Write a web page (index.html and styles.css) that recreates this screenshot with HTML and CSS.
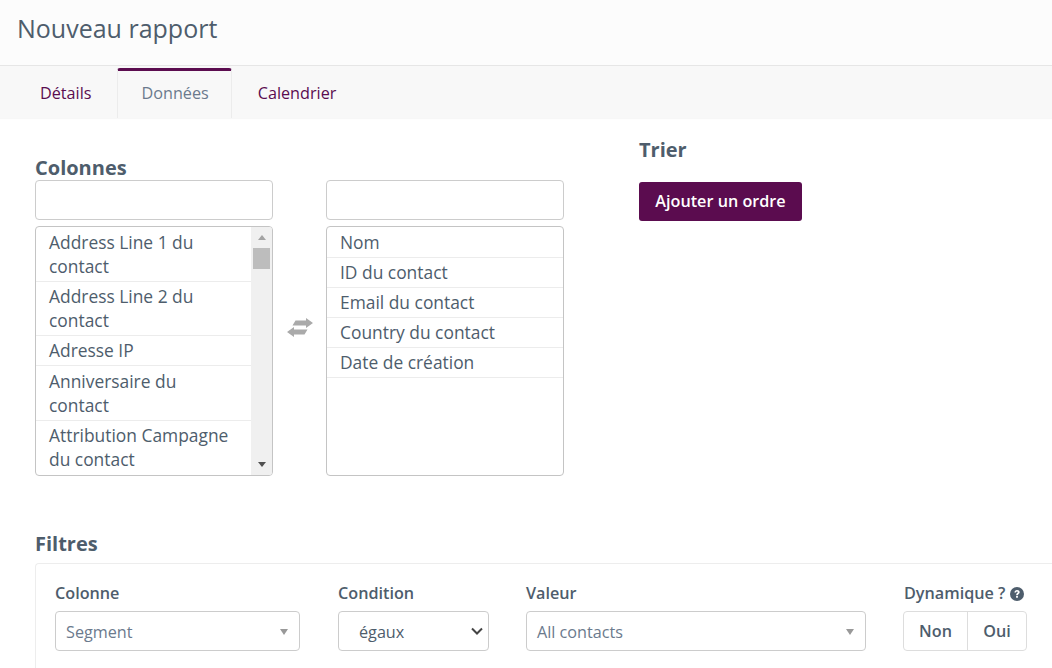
FILE: index.html
```html
<!DOCTYPE html>
<html lang="fr">
<head>
<meta charset="utf-8">
<title>Nouveau rapport</title>
<link rel="stylesheet" href="styles.css">
</head>
<body>
<header class="page-header"><h1 class="page-title">Nouveau rapport</h1></header>
<nav class="tabs">
  <a class="tab">Détails</a>
  <a class="tab tab-active">Données</a>
  <a class="tab tab-link">Calendrier</a>
</nav>
<main class="content">
  <div class="top-row">
    <section class="columns">
      <h2 class="section-title columns-title">Colonnes</h2>
      <div class="picker">
        <div class="picker-col">
          <input class="search" type="text">
          <div class="list list-scroll">
            <ul class="items">
              <li>Address Line 1 du contact</li>
              <li>Address Line 2 du contact</li>
              <li>Adresse IP</li>
              <li>Anniversaire du contact</li>
              <li>Attribution Campagne du contact</li>
            </ul>
            <div class="scrollbar">
              <span class="sb-arrow sb-up"></span>
              <span class="sb-thumb"></span>
              <span class="sb-arrow sb-down"></span>
            </div>
          </div>
        </div>
        <div class="swap">
          <svg class="swap-icon" viewBox="0 0 26 19" width="26" height="19"><path d="M8.500 2.500H19V0L26 5 19 10V7.500H5.500Z M0 14 7 9V11.500H20.500L17.500 16.500H7V19Z" fill="#aaaaaa"/></svg>
        </div>
        <div class="picker-col">
          <input class="search" type="text">
          <div class="list">
            <ul class="items">
              <li>Nom</li>
              <li>ID du contact</li>
              <li>Email du contact</li>
              <li>Country du contact</li>
              <li>Date de création</li>
            </ul>
          </div>
        </div>
      </div>
    </section>
    <section class="sort">
      <h2 class="section-title">Trier</h2>
      <button class="btn-primary" type="button">Ajouter un ordre</button>
    </section>
  </div>
  <h2 class="section-title filters-title">Filtres</h2>
  <section class="panel">
    <div class="field field-col">
      <label class="label">Colonne</label>
      <div class="select">Segment<span class="caret"></span></div>
    </div>
    <div class="field field-cond">
      <label class="label">Condition</label>
      <div class="select select-native">égaux<svg class="chevron" viewBox="0 0 12 8" width="12" height="8"><path d="M1 1.500 6 6.500 11 1.500" fill="none" stroke="#444" stroke-width="2"/></svg></div>
    </div>
    <div class="field field-val">
      <label class="label">Valeur</label>
      <div class="select">All contacts<span class="caret"></span></div>
    </div>
    <div class="field field-dyn">
      <label class="label label-dyn">Dynamique ? <svg class="help" viewBox="0 0 14 14" width="14" height="14"><circle cx="7" cy="7" r="7" fill="#4e5d6c"/><path d="M4.400 5.400C4.500 3.900 5.600 3 7 3 8.500 3 9.700 3.900 9.700 5.200 9.700 6.800 7.900 6.900 7.900 8.200H6.100C6.100 6.200 7.800 6.200 7.800 5.300 7.800 4.900 7.500 4.600 7 4.600 6.500 4.600 6.100 4.900 6 5.500Z M6.100 9H7.900V10.800H6.100Z" fill="#fff"/></svg></label>
      <div class="toggle"><span class="toggle-btn">Non</span><span class="toggle-btn">Oui</span></div>
    </div>
  </section>
</main>
</body>
</html>
```
FILE: styles.css
```css
* { box-sizing: border-box; }
html, body { margin: 0; height: 668px; overflow: hidden; }
body {
  background: #fff;
  color: #4e5d6c;
  font-family: "Open Sans", "Liberation Sans", sans-serif;
  font-size: 16.2px;
  line-height: 24px;
}
.page-header {
  height: 66px;
  background: #fcfcfc;
  border-bottom: 1px solid #e6e6e6;
  padding: 11px 17px 0;
}
.page-title { margin: 0; font-size: 25px; font-weight: 400; line-height: 34px; color: #4e5d6c; }
.tabs {
  height: 52px;
  display: flex;
  background: #f8f8f8;
  padding: 2px 0 0 17px;
  box-shadow: 0 1px 1px rgba(0,0,0,.03);
}
.tab {
  padding: 13px 25px 0 23px;
  color: #5b0c4f;
  height: 50px;
}
.tab-active {
  color: #6b7a8d;
  background: #f8f8f8;
  border: 1px solid #ececec;
  border-top: 3px solid #5b0c4f;
  border-bottom: 0;
  border-radius: 3px 3px 0 0;
  padding: 10px 22px 0 24px;
}
.tab-link { padding-left: 26px; }
.content { padding: 0 0 0 35px; }
.top-row { display: flex; height: 426px; }
.columns { width: 604px; }
.section-title { margin: 0; font-size: 20px; font-weight: 700; line-height: 24px; color: #4e5d6c; }
.columns-title { padding-top: 38px; }
.picker { display: flex; }
.picker-col { width: 238px; }
.search {
  display: block;
  width: 100%;
  height: 40px;
  border: 1px solid #ccc;
  border-radius: 4px;
  background: #fff;
  margin: 0 0 6px;
}
.list {
  height: 250px;
  border: 1px solid #c4c4c4;
  border-radius: 4px;
  display: flex;
  overflow: hidden;
  background: #fff;
}
.items { flex: 1; margin: 0; padding: 1px 0 0; list-style: none; min-width: 0; font-size: 17.4px; }
.items li {
  padding: 2px 13px 3px;
  border-bottom: 1px solid #ececec;
}
.list-scroll .items li:nth-child(4) { padding-top: 3px; }
.list-scroll .items li:last-child { padding-bottom: 12px; }
.scrollbar {
  width: 21px;
  flex: none;
  background: #f0f0f0;
  display: flex;
  flex-direction: column;
  align-items: center;
}
.sb-arrow { width: 0; height: 0; border-left: 4px solid transparent; border-right: 4px solid transparent; }
.sb-up { border-bottom: 5px solid #a3a3a3; margin-top: 8px; }
.sb-thumb { width: 17px; height: 21px; background: #bdbdbd; margin-top: 8px; }
.sb-down { border-top: 5px solid #505050; margin-top: auto; margin-bottom: 8px; }
.swap { width: 53px; display: flex; justify-content: center; padding-top: 138px; }
.swap-icon { display: block; }
.sort { padding-top: 20px; }
.btn-primary {
  display: block;
  margin-top: 20px;
  width: 163px;
  height: 39px;
  background: #5b0c4f;
  color: #fff;
  border: 0;
  border-radius: 3px;
  font-family: inherit;
  font-size: 16.2px;
  font-weight: 600;
  padding: 0 0 2px;
}
.filters-title { margin-top: -12px; }
.panel {
  margin-top: 7px;
  height: 105px;
  border: 1px solid #ededed;
  border-right: 0;
  border-bottom: 0;
  border-radius: 4px 0 0 0;
  padding: 17px 19px 0;
  display: flex;
  overflow: hidden;
}
.label { display: block; font-weight: 600; line-height: 24px; height: 30px; }
.label-dyn { padding-left: 1px; }
.field { flex: none; }
.field-col { width: 245px; margin-right: 38px; }
.field-cond { width: 151px; margin-right: 37px; }
.field-val { width: 340px; margin-right: 37px; }
.field-dyn { width: 124px; white-space: nowrap; }
.help { vertical-align: -2px; }
.select {
  position: relative;
  height: 40px;
  border: 1px solid #ccc;
  border-radius: 4px;
  padding: 8px 10px;
  color: #6b7a8d;
  background: #fff;
}
.select-native { padding-left: 20px; color: #4e5d6c; }
.caret {
  position: absolute;
  right: 11px;
  top: 17px;
  width: 0;
  height: 0;
  border-left: 4px solid transparent;
  border-right: 4px solid transparent;
  border-top: 6px solid #999;
}
.chevron { position: absolute; right: 5px; top: 15px; }
.toggle { display: flex; height: 40px; border: 1px solid #ddd; border-radius: 4px; }
.toggle-btn { flex: none; text-align: center; font-weight: 600; padding-top: 7px; }
.toggle-btn:first-child { width: 64px; border-right: 1px solid #ddd; }
.toggle-btn:last-child { width: 58px; }
```
